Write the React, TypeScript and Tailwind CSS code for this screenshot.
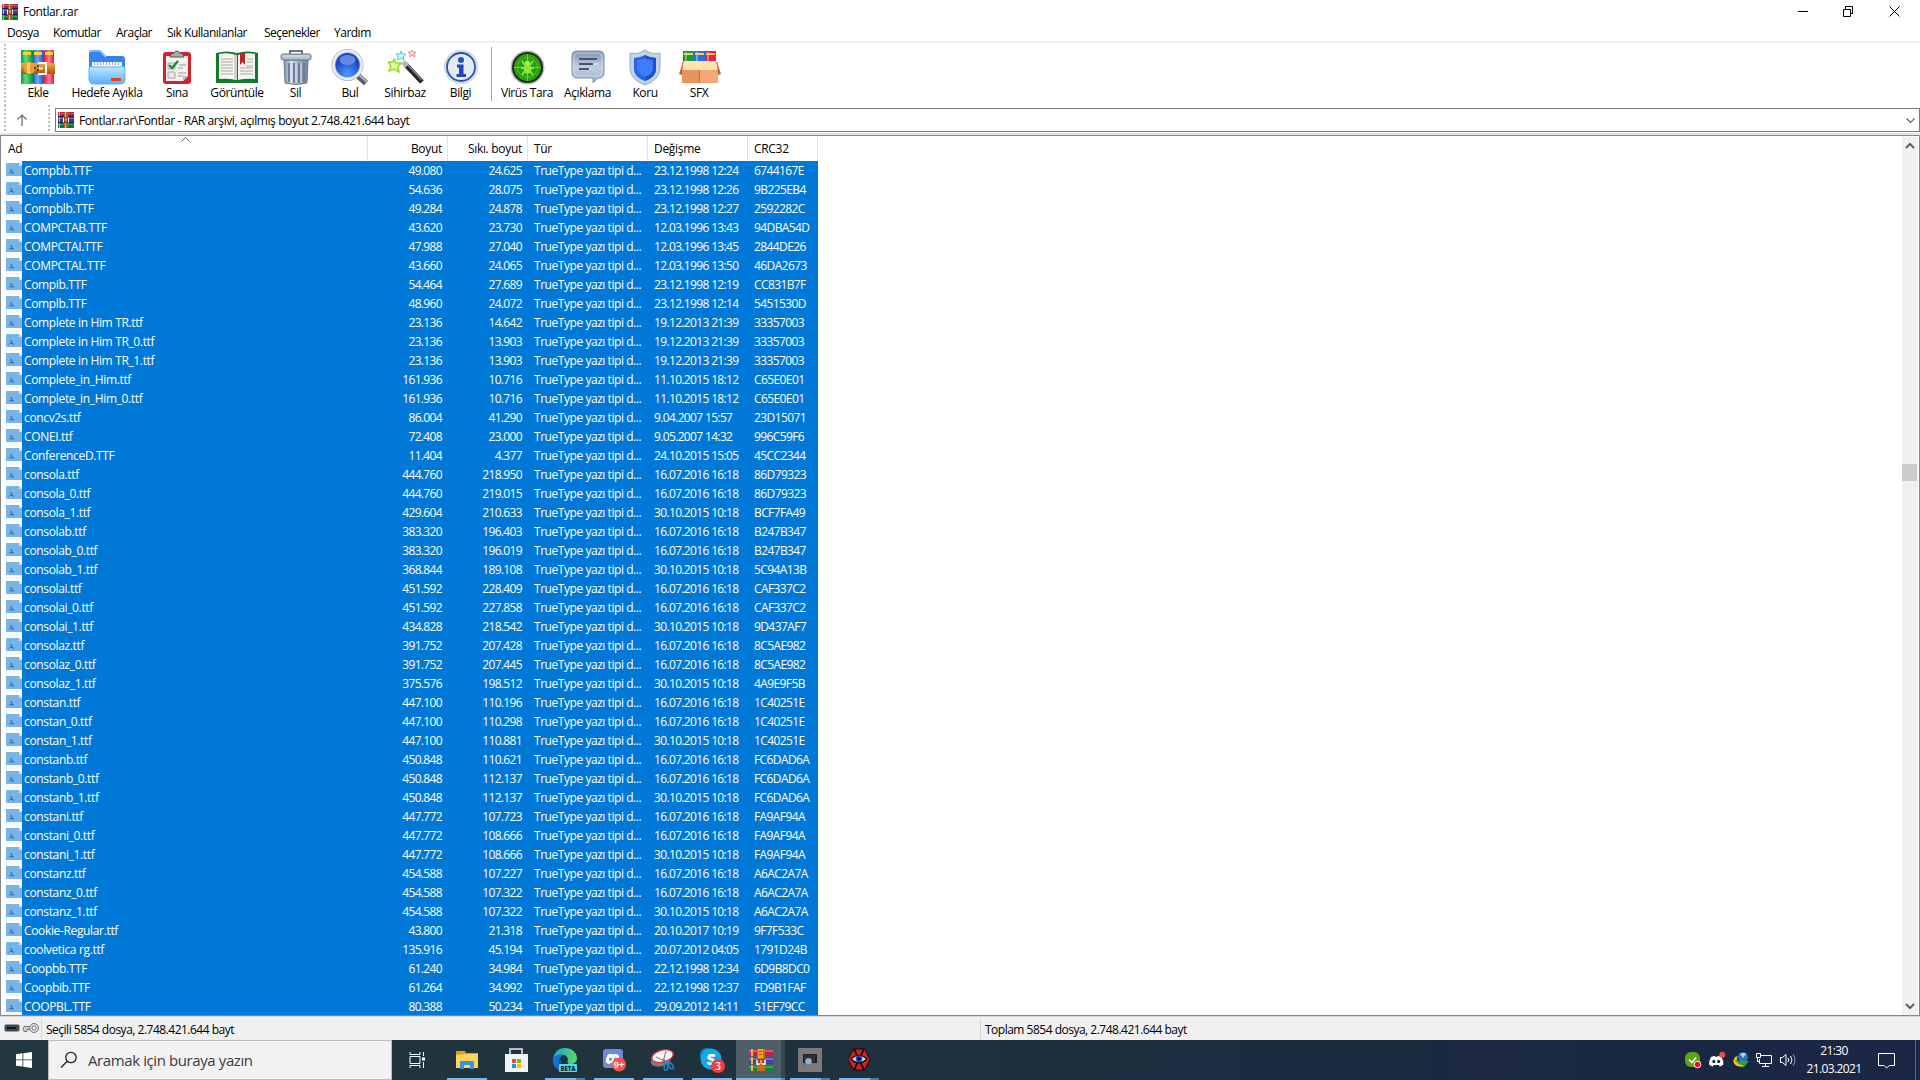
import React from "react";

// name | size | packed | modified | crc
const files = `Compbb.TTF|49.080|24.625|23.12.1998 12:24|6744167E
Compbib.TTF|54.636|28.075|23.12.1998 12:26|9B225EB4
Compblb.TTF|49.284|24.878|23.12.1998 12:27|2592282C
COMPCTAB.TTF|43.620|23.730|12.03.1996 13:43|94DBA54D
COMPCTAI.TTF|47.988|27.040|12.03.1996 13:45|2844DE26
COMPCTAL.TTF|43.660|24.065|12.03.1996 13:50|46DA2673
Compib.TTF|54.464|27.689|23.12.1998 12:19|CC831B7F
Complb.TTF|48.960|24.072|23.12.1998 12:14|5451530D
Complete in Him TR.ttf|23.136|14.642|19.12.2013 21:39|33357003
Complete in Him TR_0.ttf|23.136|13.903|19.12.2013 21:39|33357003
Complete in Him TR_1.ttf|23.136|13.903|19.12.2013 21:39|33357003
Complete_in_Him.ttf|161.936|10.716|11.10.2015 18:12|C65E0E01
Complete_in_Him_0.ttf|161.936|10.716|11.10.2015 18:12|C65E0E01
concv2s.ttf|86.004|41.290|9.04.2007 15:57|23D15071
CONEI.ttf|72.408|23.000|9.05.2007 14:32|996C59F6
ConferenceD.TTF|11.404|4.377|24.10.2015 15:05|45CC2344
consola.ttf|444.760|218.950|16.07.2016 16:18|86D79323
consola_0.ttf|444.760|219.015|16.07.2016 16:18|86D79323
consola_1.ttf|429.604|210.633|30.10.2015 10:18|BCF7FA49
consolab.ttf|383.320|196.403|16.07.2016 16:18|B247B347
consolab_0.ttf|383.320|196.019|16.07.2016 16:18|B247B347
consolab_1.ttf|368.844|189.108|30.10.2015 10:18|5C94A13B
consolai.ttf|451.592|228.409|16.07.2016 16:18|CAF337C2
consolai_0.ttf|451.592|227.858|16.07.2016 16:18|CAF337C2
consolai_1.ttf|434.828|218.542|30.10.2015 10:18|9D437AF7
consolaz.ttf|391.752|207.428|16.07.2016 16:18|8C5AE982
consolaz_0.ttf|391.752|207.445|16.07.2016 16:18|8C5AE982
consolaz_1.ttf|375.576|198.512|30.10.2015 10:18|4A9E9F5B
constan.ttf|447.100|110.196|16.07.2016 16:18|1C40251E
constan_0.ttf|447.100|110.298|16.07.2016 16:18|1C40251E
constan_1.ttf|447.100|110.881|30.10.2015 10:18|1C40251E
constanb.ttf|450.848|110.621|16.07.2016 16:18|FC6DAD6A
constanb_0.ttf|450.848|112.137|16.07.2016 16:18|FC6DAD6A
constanb_1.ttf|450.848|112.137|30.10.2015 10:18|FC6DAD6A
constani.ttf|447.772|107.723|16.07.2016 16:18|FA9AF94A
constani_0.ttf|447.772|108.666|16.07.2016 16:18|FA9AF94A
constani_1.ttf|447.772|108.666|30.10.2015 10:18|FA9AF94A
constanz.ttf|454.588|107.227|16.07.2016 16:18|A6AC2A7A
constanz_0.ttf|454.588|107.322|16.07.2016 16:18|A6AC2A7A
constanz_1.ttf|454.588|107.322|30.10.2015 10:18|A6AC2A7A
Cookie-Regular.ttf|43.800|21.318|20.10.2017 10:19|9F7F533C
coolvetica rg.ttf|135.916|45.194|20.07.2012 04:05|1791D24B
Coopbb.TTF|61.240|34.984|22.12.1998 12:34|6D9B8DC0
Coopbib.TTF|61.264|34.992|22.12.1998 12:37|FD9B1FAF
COOPBL.TTF|80.388|50.234|29.09.2012 14:11|51EF79CC`
  .split("\n")
  .map((line) => line.split("|"));

const menu = [
  { label: "Dosya", width: "w-[46px]" },
  { label: "Komutlar", width: "w-[63px]" },
  { label: "Araçlar", width: "w-[51px]" },
  { label: "Sık Kullanılanlar", width: "w-[97px]" },
  { label: "Seçenekler", width: "w-[70px]" },
  { label: "Yardım", width: "w-[60px]" },
];

function SmallBooksIcon() {
  return (
    <svg width="16" height="16" viewBox="0 0 16 16" className="shrink-0">
      <path d="M0 0h16v5H0z" fill="#b51f43" />
      <path d="M0 1h16v1H0z" fill="#d2537a" />
      <path d="M0 5h16v6H0z" fill="#3f3a94" />
      <path d="M0 6h16v1H0z" fill="#7a78c4" />
      <path d="M0 11h16v5H0z" fill="#0c7a34" />
      <path d="M0 12h16v1H0z" fill="#2da45a" />
      <path d="M0 4.500h16M0 10.500h16" stroke="#2a1c33" />
      <path d="M1 0h1v4H1zM1 5h1v5H1zM1 11h1v5H1z" fill="#e3b04a" />
      <path d="M6 0h4v16H6z" fill="#a8622b" />
      <path d="M7 0h1v5H7zM7 11h1v5H7z" fill="#f1a846" />
      <path d="M5 5h6v6H5z" fill="#8a3b2a" />
      <path d="M5.500 10.500v-5M10.500 10.500v-5M8 6v3.500" stroke="#f4f0ec" />
    </svg>
  );
}

function BooksIcon({ className }: { className: string }) {
  return (
    <svg viewBox="0 0 24 24" className={className}>
      <rect y="1" width="24" height="7" rx="1" fill="#c2224c" />
      <rect y="2" width="24" height="2" fill="#e0567a" />
      <rect y="9" width="24" height="7" rx="1" fill="#4a3f9f" />
      <rect y="10" width="24" height="2" fill="#7770c4" />
      <rect y="17" width="24" height="6" rx="1" fill="#128035" />
      <rect y="18" width="24" height="2" fill="#2fae58" />
      <path d="M2 1h2v7H2zM2 9h2v7H2zM2 17h2v6H2z" fill="#f2b632" />
      <path d="M8 1h8v22H8z" fill="#c9691a" />
      <path d="M9 1h5v9H9z" fill="#f3a12e" />
      <path d="M10 3h3v1h-3zM10 6h3v1h-3z" fill="#a55a10" />
      <path d="M8 11h8v5H8z" fill="#8b4a17" />
      <path d="M8 17v-5M16 17v-5M8 16h3M13 16h3" fill="none" stroke="#f4f4f4" strokeWidth="1.600" />
      <path d="M12 12v4" stroke="#ffc25c" strokeWidth="1.500" />
    </svg>
  );
}

function AddIcon() {
  return (
    <svg width="34" height="34" viewBox="0 0 34 34">
      <defs>
        <linearGradient id="bookG"><stop stopColor="#0b9b3a" /><stop offset=".4" stopColor="#5fdc7c" /><stop offset="1" stopColor="#0d8f36" /></linearGradient>
        <linearGradient id="bookB"><stop stopColor="#1c58d8" /><stop offset=".4" stopColor="#6ea8ff" /><stop offset="1" stopColor="#1c4fd0" /></linearGradient>
        <linearGradient id="bookR"><stop stopColor="#e0173c" /><stop offset=".5" stopColor="#ff8093" /><stop offset="1" stopColor="#d81a3c" /></linearGradient>
        <linearGradient id="belt" x2="0" y2="1"><stop stopColor="#f2b04a" /><stop offset="1" stopColor="#a35508" /></linearGradient>
      </defs>
      <rect x="0" width="12" height="34" rx="1" fill="url(#bookG)" />
      <rect x="12" width="11" height="34" rx="1" fill="url(#bookB)" />
      <rect x="23" width="10" height="34" rx="1" fill="url(#bookR)" />
      <path d="M2 2h8v3H2zM13 2h8v3h-8zM24 2h8v3h-8z" fill="#fbd23c" />
      <path d="M0 13h34v11H0z" fill="url(#belt)" />
      <rect x="3" y="12" width="11" height="12" rx="5" fill="#eba03a" />
      <path d="M6 13h3v10H6z" fill="#ffd277" />
      <path d="M13 17h1.500v2H13zM16 15h1.500v2H16zM16 19h1.500v2H16z" fill="#4d2a07" />
      <path d="M17 13h8v11h-8M18 18.500h4" fill="none" stroke="#f1f1f1" strokeWidth="2" />
    </svg>
  );
}

function ExtractIcon() {
  return (
    <svg width="38" height="36" viewBox="0 0 38 36">
      <defs>
        <linearGradient id="fold" x2="0" y2="1"><stop stopColor="#c3e8ff" /><stop offset="1" stopColor="#57b1f8" /></linearGradient>
      </defs>
      <path d="M1 4q0-3 3-3h7q2 0 4 3l3 3h16q3 0 3 3v21H1z" fill="#3685ee" />
      <path d="M2 3q1-1 3-1h7l6 6" fill="none" stroke="#8cc3ff" strokeWidth="1.500" />
      <rect x="4" y="13" width="30" height="12" fill="#f3f5f8" />
      <path d="M6 14.500h27" stroke="#a6abb4" strokeWidth="3" strokeDasharray="1 2" />
      <path d="M1 19q2-3 5-1h26q3-2 5 1v11q0 5-5 5H6q-5 0-5-5z" fill="url(#fold)" stroke="#62aef2" />
      <rect x="23" y="29" width="10" height="3" fill="#e0401f" />
    </svg>
  );
}

function TestIcon() {
  return (
    <svg width="30" height="35" viewBox="0 0 30 35">
      <rect x="1" y="2" width="28" height="32" rx="3" fill="#d3222c" />
      <path d="M4 6h22v20l-5 5H4z" fill="#f1f1f1" />
      <path d="M26 26l-5 5v-5z" fill="#bdbdbd" />
      <path d="M8 7q0-4 4-4 1-2 3-2t3 2q4 0 4 4z" fill="#a9a9ad" stroke="#55555c" />
      <path d="M6 13h7v6H6zM6 22h7v6H6z" fill="#e8e8e8" stroke="#aaa" />
      <path d="M7 15l3 3 6-7" fill="none" stroke="#23873b" strokeWidth="2.400" />
      <path d="M17 15h7M16 18h5M16 23h8M16 26h5" stroke="#9a9a9a" />
    </svg>
  );
}

function ViewIcon() {
  return (
    <svg width="42" height="33" viewBox="0 0 42 33">
      <path d="M0 2q11-3 21 0 10-3 21 0v30H0z" fill="#137a2b" />
      <path d="M3 3q9-2 17 1v25q-8-2-17-1zM39 3q-9-2-17 1v25q8-2 17-1z" fill="#f6f5ee" />
      <path d="M18 4h3v25h-3z" fill="#d2d1ca" />
      <path d="M5 8h12M5 11h12M5 14h12M5 17h12M5 20h12M5 23h12M30 15h7M24 17h13M24 20h13M24 23h13M31 8h6M31 11h6" stroke="#a5a8a5" />
      <path d="M24 2h5v12l-2.500-3-2.500 3z" fill="#c81f2c" />
    </svg>
  );
}

function DeleteIcon() {
  return (
    <svg width="32" height="36" viewBox="0 0 32 36">
      <defs>
        <linearGradient id="bin"><stop stopColor="#7f91a9" /><stop offset=".3" stopColor="#d5dfea" /><stop offset=".6" stopColor="#9dadc1" /><stop offset="1" stopColor="#71839b" /></linearGradient>
      </defs>
      <path d="M10 5V2h12v3" fill="none" stroke="#65758a" strokeWidth="2" />
      <path d="M4 11h24l-1 23q-11 3-22 0z" fill="url(#bin)" stroke="#697b92" />
      <path d="M9 14v19M14 14v20M19 14v20M24 14v19" stroke="#667890" strokeWidth="1.800" />
      <path d="M11 14v19M16 14v20M21 14v20" stroke="#dbe5ef" />
      <rect x="1" y="5" width="30" height="6" rx="2" fill="#b3c0cf" stroke="#66778e" />
      <path d="M3 7h26" stroke="#dce5ee" />
    </svg>
  );
}

function FindIcon() {
  return (
    <svg width="38" height="37" viewBox="0 0 38 37">
      <defs>
        <radialGradient id="lens" cy=".8"><stop stopColor="#4d9dff" /><stop offset="1" stopColor="#1c46c4" /></radialGradient>
      </defs>
      <path d="M26 26l9 8" stroke="#555d68" strokeWidth="6" />
      <path d="M27 25l9 8" stroke="#b4bac2" strokeWidth="2" />
      <circle cx="16.500" cy="16" r="14" fill="url(#lens)" stroke="#aab2bf" strokeWidth="4" />
      <circle cx="16.500" cy="16" r="14" fill="none" stroke="#e8edf4" strokeWidth="2.600" />
      <ellipse cx="16.500" cy="11" rx="8" ry="5" fill="#7da4ed" opacity=".7" />
    </svg>
  );
}

function WizardIcon() {
  return (
    <svg width="37" height="36" viewBox="0 0 37 36" className="ml-[3px]">
      <path d="M17 15l17 18" stroke="#28282c" strokeWidth="5" />
      <path d="M18 14l16 17" stroke="#85858a" strokeWidth="1.500" />
      <path d="M15 13l4 4" stroke="#b9b9bd" strokeWidth="5" />
      <path d="M6 10l2 4 5 0-3 4 1 5-5-3-5 2 2-5-3-4 5 0z" fill="#e2ff9c" stroke="#8fe02c" strokeWidth="1.500" />
      <path d="M13 2l1 3 4 0-3 3 1 3-3-2-4 2 1-4-2-2 4 0z" fill="#d6fbff" stroke="#37d3f0" />
      <path d="M24 1l1 2 3 0-2 2 1 3-3-2-2 2 0-3-2-2 2 0z" fill="#ffd2d2" stroke="#f08c90" />
    </svg>
  );
}

function InfoIcon() {
  return (
    <svg width="36" height="36" viewBox="0 0 36 36">
      <circle cx="18" cy="18" r="17" fill="#cdd2da" />
      <circle cx="18" cy="18" r="15.500" fill="#eceff4" />
      <circle cx="18" cy="18" r="14" fill="#e5e9f0" stroke="#2b50b4" strokeWidth="1.800" />
      <circle cx="18" cy="11" r="3" fill="#2451bd" />
      <path d="M14 15.500h6.500V25H23v3h-9.500v-3H16v-6.500h-2z" fill="#2149b8" />
    </svg>
  );
}

function VirusIcon() {
  return (
    <svg width="35" height="35" viewBox="0 0 35 35">
      <circle cx="17.500" cy="17.500" r="17" fill="#bababa" />
      <circle cx="17.500" cy="17.500" r="15.500" fill="#242b22" />
      <circle cx="17.500" cy="17.500" r="13.500" fill="#2b9e12" />
      <circle cx="17.500" cy="17.500" r="10" fill="none" stroke="#4fc128" />
      <path d="M17.500 4v27M4 17.500h27" stroke="#65d637" />
      <path d="M12 11l3 4M23 11l-3 4M11 18h4M24 18h-4M12 25l3-4M23 25l-3-4" stroke="#a1f252" strokeWidth="1.300" />
      <ellipse cx="17.500" cy="19" rx="4" ry="5" fill="#8aea38" />
      <circle cx="17.500" cy="13" r="2.500" fill="#9df04d" />
    </svg>
  );
}

function CommentIcon() {
  return (
    <svg width="34" height="34" viewBox="0 0 34 34">
      <defs>
        <linearGradient id="bub" x2="0" y2="1"><stop stopColor="#7d91b2" /><stop offset=".5" stopColor="#c2cfe3" /><stop offset="1" stopColor="#9fb0cb" /></linearGradient>
      </defs>
      <path d="M6 1h22q5 0 5 5v17q0 5-5 5h-1l-5 5v-5H6q-5 0-5-5V6q0-5 5-5z" fill="url(#bub)" stroke="#8193ae" />
      <rect x="3" y="3" width="28" height="23" rx="4" fill="none" stroke="#d7e1ef" opacity=".7" />
      <path d="M8 9h18M8 14h14M8 19h10" stroke="#46566f" strokeWidth="1.800" />
      <path d="M22 14h5M18 19h2" stroke="#eef2f8" />
    </svg>
  );
}

function ProtectIcon() {
  return (
    <svg width="32" height="37" viewBox="0 0 32 37">
      <path d="M16 1q7 5 15 3v15q0 12-15 17Q1 31 1 19V4q8 2 15-3z" fill="#c4d1e4" stroke="#9dadc5" />
      <path d="M16 6q5 3 11 3v11q0 8-11 12Q5 28 5 20V9q6 0 11-3z" fill="#2464e8" />
      <path d="M16 6q5 3 11 3v11q0 8-11 12z" fill="#1d4fcf" />
      <path d="M16 9q4 2 8 2v8q0 6-8 9-8-3-8-9v-8q4 0 8-2z" fill="#3d7df8" />
    </svg>
  );
}

function SfxIcon() {
  return (
    <svg width="42" height="34" viewBox="0 0 42 34" className="ml-[2px]">
      <path d="M4 1h11v12H4z" fill="#169a40" />
      <path d="M15 1h11v12H15z" fill="#2b6ee0" />
      <path d="M26 1h11v12H26z" fill="#e0244a" />
      <path d="M6 2h2v10H6zM17 2h2v10h-2zM28 2h2v10h-2z" fill="#fff" opacity=".35" />
      <path d="M5 4h9M16 4h9M27 4h9" stroke="#fbd23c" strokeWidth="2" />
      <path d="M3 12h36v21H3z" fill="#e9935e" />
      <path d="M21 20h18v13H21z" fill="#f3a976" />
      <path d="M5 11h32l2 9H3z" fill="#ffe2ae" />
      <path d="M4 12L0 24l3 1zM38 12l4 12-3 1z" fill="#b5673c" />
      <path d="M20.500 20v13" stroke="#c2703e" />
    </svg>
  );
}

const tools = [
  { label: "Ekle", width: "w-[54px]", icon: <AddIcon /> },
  { label: "Hedefe Ayıkla", width: "w-[84px]", icon: <ExtractIcon /> },
  { label: "Sına", width: "w-[56px]", icon: <TestIcon /> },
  { label: "Görüntüle", width: "w-[64px]", icon: <ViewIcon /> },
  { label: "Sil", width: "w-[53px]", icon: <DeleteIcon /> },
  { label: "Bul", width: "w-[56px]", icon: <FindIcon /> },
  { label: "Sihirbaz", width: "w-[54px]", icon: <WizardIcon /> },
  { label: "Bilgi", width: "w-[57px]", icon: <InfoIcon /> },
];

const tools2 = [
  { label: "Virüs Tara", width: "w-[60px]", icon: <VirusIcon /> },
  { label: "Açıklama", width: "w-[61px]", icon: <CommentIcon /> },
  { label: "Koru", width: "w-[54px]", icon: <ProtectIcon /> },
  { label: "SFX", width: "w-[54px]", icon: <SfxIcon /> },
];

function Tool({ label, width, icon }: { label: string; width: string; icon: React.ReactNode }) {
  return (
    <div className={`${width} flex flex-col items-center shrink-0`}>
      <div className="h-[38px] flex items-center">{icon}</div>
      <span className="leading-[14px]">{label}</span>
    </div>
  );
}

function FontFileIcon() {
  return (
    <svg width="16" height="19" viewBox="0 0 16 19" className="shrink-0">
      <path d="M0 15h16v4H0z" fill="#f7f7f7" />
      <path d="M0 2h13l3 3v10H0z" fill="#78b4e6" />
      <path d="M13 2v3h3z" fill="#c9dff2" />
      <path d="M3 13l2-5" stroke="#4f92d2" strokeWidth=".8" />
      <path d="M5 8l2.500 5M4 11.500h2.500" stroke="#2468bb" />
    </svg>
  );
}

function Grip({ className }: { className: string }) {
  return (
    <div className={`${className} w-[2px] shrink-0 bg-[repeating-linear-gradient(to_bottom,#bdbdbd_0_2px,#fff_2px_4px)]`} />
  );
}

function FileList() {
  return (
    <div className="h-[881px] flex border border-[#828790] bg-white overflow-hidden shrink-0">
      <div className="flex-1 overflow-hidden">
        <div className="h-[25px] flex leading-[25px] tracking-[-0.3px] relative">
          <div className="w-[367px] pl-[7px] border-r border-[#e5e5e5]">Ad</div>
          <div className="w-[80px] pr-[5px] text-right border-r border-[#e5e5e5]">Boyut</div>
          <div className="w-[80px] pr-[5px] text-right border-r border-[#e5e5e5]">Sıkı. boyut</div>
          <div className="w-[120px] pl-[6px] border-r border-[#e5e5e5]">Tür</div>
          <div className="w-[100px] pl-[6px] border-r border-[#e5e5e5]">Değişme</div>
          <div className="w-[70px] pl-[6px] border-r border-[#e5e5e5]">CRC32</div>
          <svg width="9" height="5" viewBox="0 0 9 5" className="absolute left-[180px] top-[1px]">
            <path d="M.5 4.500l4-4 4 4" fill="none" stroke="#666" />
          </svg>
        </div>
        {files.map(([name, size, packed, modified, crc]) => (
          <div key={name} className="h-[19px] w-[817px] pl-[5px] flex leading-[19px] text-white whitespace-nowrap">
            <FontFileIcon />
            <div className="flex flex-1 bg-[#0078d7]">
              <div className="w-[346px] pl-[2px] tracking-[-0.35px]">{name}</div>
              <div className="w-[80px] pr-[6px] text-right tracking-[-0.65px]">{size}</div>
              <div className="w-[80px] pr-[6px] text-right tracking-[-0.65px]">{packed}</div>
              <div className="w-[120px] pl-[6px] tracking-[-0.45px]">TrueType yazı tipi d...</div>
              <div className="w-[100px] pl-[6px] tracking-[-0.65px]">{modified}</div>
              <div className="pl-[6px] tracking-[-0.6px]">{crc}</div>
            </div>
          </div>
        ))}
      </div>
      <div className="w-[16px] mr-[1px] mt-px bg-[#f0f0f0] flex flex-col items-center">
        <svg width="16" height="17" viewBox="0 0 16 17">
          <path d="M4 11l4-4 4 4" fill="none" stroke="#606060" strokeWidth="2" />
        </svg>
        <div className="mt-[310px] w-[15px] h-[17px] self-start bg-[#cdcdcd]" />
        <svg width="16" height="17" viewBox="0 0 16 17" className="mt-auto">
          <path d="M4 6l4 4 4-4" fill="none" stroke="#606060" strokeWidth="2" />
        </svg>
      </div>
    </div>
  );
}

function ExplorerIcon() {
  return (
    <svg width="24" height="24" viewBox="0 0 24 24">
      <path d="M1 3h9l1 2h12v3H1z" fill="#e2a10c" />
      <path d="M1 7l10-1h12v14H1z" fill="#ffd35e" />
      <path d="M5 21v-7q0-1 1-1h12q1 0 1 1v7h-4v-4H9v4z" fill="#3a94dd" />
    </svg>
  );
}

function StoreIcon() {
  return (
    <svg width="24" height="26" viewBox="0 0 24 26">
      <path d="M6 9V2h12v7" fill="none" stroke="#e9e9e9" strokeWidth="1.500" />
      <path d="M1 7h23v18H1z" fill="#f2f2f2" />
      <path d="M8 12h4v4H8z" fill="#f04e1f" />
      <path d="M13 12h4v4h-4z" fill="#7db900" />
      <path d="M8 17h4v4H8z" fill="#00a2ed" />
      <path d="M13 17h4v4h-4z" fill="#fdb800" />
    </svg>
  );
}

function EdgeIcon() {
  return (
    <svg width="26" height="26" viewBox="0 0 26 26">
      <defs>
        <linearGradient id="edge"><stop stopColor="#1b9de2" /><stop offset="1" stopColor="#5ed85e" /></linearGradient>
      </defs>
      <path d="M1 12C2 4 8 1 13 1c7 0 12 5 12 10 0 4-3 6-6 6-4 0-4-2-3-4 0-4-4-6-8-5-3 0-6 2-7 4z" fill="url(#edge)" />
      <path d="M1 12c2-4 6-5 10-4-4 2-5 8-2 12 1 2 3 3 4 4C6 25 0 19 1 12z" fill="#1272cf" />
      <path d="M10 10c-2 4 0 8 4 9 3 1 6 0 9-1-2 5-6 7-10 7-5-3-8-10-3-15z" fill="#0d4d9b" />
      <rect x="7" y="17" width="18" height="8" rx="1" fill="#4adcf5" />
      <text x="16" y="23.500" textAnchor="middle" textLength="15" lengthAdjust="spacingAndGlyphs" fontSize="7" fontWeight="800" letterSpacing="0" fill="#0b1a26" fontFamily="Open Sans, sans-serif">BETA</text>
    </svg>
  );
}

function DiscordFace({ fill }: { fill: string }) {
  return (
    <>
      <path d="M5 5q3-1.500 5-1.500l.5 1h3l.5-1q2 0 5 1.500 3 5 2.500 10-2 2-5 2.500l-1-2h-7l-1 2q-3-.5-5-2.500Q2 10 5 5z" fill="#fff" />
      <ellipse cx="8.800" cy="11" rx="2" ry="2.200" fill={fill} />
      <ellipse cx="15.200" cy="11" rx="2" ry="2.200" fill={fill} />
    </>
  );
}

function DiscordIcon() {
  return (
    <svg width="24" height="24" viewBox="0 0 24 24">
      <rect x="1" y="1" width="20" height="19" rx="3" fill="#7289da" />
      <g transform="translate(2 3) scale(.75)"><DiscordFace fill="#7289da" /></g>
      <circle cx="17" cy="16.500" r="7" fill="#f25555" />
      <text x="17" y="20" textAnchor="middle" fontSize="9.500" fontWeight="600" letterSpacing="0" fill="#fff" fontFamily="Open Sans, sans-serif">9+</text>
    </svg>
  );
}

function SnipIcon() {
  return (
    <svg width="26" height="24" viewBox="0 0 26 24">
      <ellipse cx="11" cy="12" rx="10.500" ry="6" fill="#7d7d82" transform="rotate(-18 11 12)" />
      <ellipse cx="12.500" cy="8" rx="11" ry="6" fill="#f5f5f5" stroke="#d8343a" strokeWidth="1.300" transform="rotate(-15 13 8)" />
      <path d="M6 9l10 5M16 3l-3 11" stroke="#777" />
      <path d="M13 11l5 5M15 13l6 2" stroke="#3f83b5" strokeWidth="1.500" />
      <ellipse cx="16" cy="19" rx="1.800" ry="3.200" fill="none" stroke="#1e7fc0" strokeWidth="1.700" />
      <ellipse cx="21" cy="18" rx="1.800" ry="3.200" fill="none" stroke="#1e7fc0" strokeWidth="1.700" transform="rotate(-35 21 18)" />
    </svg>
  );
}

function SkypeIcon() {
  return (
    <svg width="26" height="26" viewBox="0 0 26 26">
      <circle cx="8" cy="8" r="7" fill="#0a86d0" />
      <circle cx="16" cy="17" r="7" fill="#0a86d0" />
      <circle cx="12" cy="12" r="10.500" fill="#13a8e8" />
      <text x="12" y="17.500" textAnchor="middle" fontSize="16" fontWeight="800" letterSpacing="0" fill="#fff" fontFamily="Open Sans, sans-serif">S</text>
      <circle cx="19" cy="19" r="7" fill="#f03d3d" />
      <text x="19" y="22.700" textAnchor="middle" fontSize="10" fontWeight="600" letterSpacing="0" fill="#fff" fontFamily="Open Sans, sans-serif">3</text>
    </svg>
  );
}

function CaptureIcon() {
  return (
    <svg width="24" height="24" viewBox="0 0 24 24">
      <path d="M0 0h24v24H0z" fill="#7b7b7b" />
      <path d="M5 6h14v9H5z" fill="#1d1f21" />
      <path d="M7 7v4M10 7v4M13 7v6M16 7v7" stroke="#515458" />
      <circle cx="10.500" cy="13.500" r="3.300" fill="#8fb4cd" stroke="#6d8698" />
      <path d="M8 16l-3.500 4" stroke="#5d6f7b" strokeWidth="1.300" />
    </svg>
  );
}

function EyeIcon() {
  return (
    <svg width="24" height="24" viewBox="0 0 24 24">
      <path d="M6.500 1h11L23 11.500 17.500 22h-11L1 11.500z" fill="#d12222" stroke="#1c0808" />
      <path d="M7 1l5 10.500L17 1M7 22l5-10.500L17 22" fill="none" stroke="#1c0808" strokeWidth="1.800" />
      <path d="M3 11q4-4 9-4t9 4q-4 4.500-9 4.500T3 11z" fill="#161616" />
      <path d="M5 11q3-3 7-3t7 3q-3 3-7 3t-7-3z" fill="#d5d8e6" />
      <circle cx="12" cy="10.800" r="3.300" fill="#1f45c4" />
      <circle cx="12" cy="10.800" r="1.600" fill="#000" />
    </svg>
  );
}

// mark: underline below the icon, stacked when several windows are open
const apps = [
  { key: "explorer", icon: <ExplorerIcon />, mark: "single" },
  { key: "store", icon: <StoreIcon />, mark: "none" },
  { key: "edge", icon: <EdgeIcon />, mark: "stack" },
  { key: "discord", icon: <DiscordIcon />, mark: "single" },
  { key: "snip", icon: <SnipIcon />, mark: "single" },
  { key: "skype", icon: <SkypeIcon />, mark: "single" },
  { key: "winrar", icon: <BooksIcon className="w-6 h-6" />, mark: "active" },
  { key: "capture", icon: <CaptureIcon />, mark: "stack" },
  { key: "eye", icon: <EyeIcon />, mark: "stack" },
];

function Taskbar() {
  return (
    <div className="h-[40px] flex shrink-0 bg-[linear-gradient(to_right,#22373f,#20323d_40%,#1b2940_75%,#1a2645)]">
      <div className="w-[48px] flex items-center justify-center">
        <svg width="16" height="16" viewBox="0 0 16 16" fill="#fff">
          <path d="M0 2.200L6.500 1.300v6.200H0zM7.300 1.200L16 0v7.500H7.300zM0 8.300h6.500v6.200L0 13.700zM7.300 8.300H16V16l-8.700-1.200z" />
        </svg>
      </div>
      <div className="w-[344px] bg-[#f2f2f2] border border-[#bcbcbc] flex items-center">
        <svg width="18" height="18" viewBox="0 0 18 18" className="ml-[11px]">
          <circle cx="11" cy="6.500" r="5.200" fill="none" stroke="#222" strokeWidth="1.300" />
          <path d="M7.200 10.200L1 16.500" stroke="#222" strokeWidth="1.300" />
        </svg>
        <span className="ml-[10px] text-[15px] tracking-[-0.4px] text-[#3c3c3c]">Aramak için buraya yazın</span>
      </div>
      <div className="w-[50px] flex items-center justify-center">
        <svg width="17" height="16" viewBox="0 0 17 16" fill="none" stroke="#fff">
          <path d="M1 0v2.500h10V0M1 16v-2.500h10V16M1 4.500h10v7H1zM14.500 0v4M14.500 10v6" />
          <path d="M13 5.500h3v3h-3z" fill="#fff" stroke="none" />
        </svg>
      </div>
      {apps.map((app) => (
        <div
          key={app.key}
          className={`w-[49px] flex flex-col items-center ${app.mark === "active" ? "bg-[linear-gradient(to_right,#4e5f69_45px,#38464f_45px)]" : ""}`}
        >
          <div className="h-[38px] w-[40px] flex items-center justify-center pt-px">{app.icon}</div>
          {app.mark === "single" && <div className="h-[2px] w-[40px] bg-[#76b9ed]" />}
          {app.mark === "active" && <div className="h-[2px] w-full bg-[linear-gradient(to_right,#76b9ed_45px,#568bb3_45px)]" />}
          {app.mark === "stack" && <div className="h-[2px] w-[40px] bg-[linear-gradient(to_right,#76b9ed_31px,#4d7fa6_31px)]" />}
        </div>
      ))}
      <div className="ml-auto flex items-center text-white">
        <svg width="18" height="18" viewBox="0 0 18 18">
          <rect x="1" y="1" width="15" height="15" rx="6" fill="#5ba614" />
          <path d="M5 8.500l3 3 4-5" fill="none" stroke="#fff" strokeWidth="1.600" />
          <circle cx="13.500" cy="13.500" r="3.300" fill="#e81123" stroke="#fff" />
        </svg>
        <svg width="18" height="18" viewBox="0 0 24 24" className="ml-[6px]">
          <g transform="translate(-1 3)"><DiscordFace fill="#1b2741" /></g>
          <circle cx="19" cy="5" r="4" fill="#f04747" />
        </svg>
        <svg width="18" height="18" viewBox="0 0 18 18" className="ml-[6px]">
          <path d="M3 6q-4 6 2 9 6 2 9-1-6 0-8-3-2-3 0-6z" fill="#f0c418" />
          <circle cx="11" cy="6" r="5" fill="#2a6fc8" />
          <path d="M8 3q4-2 6 0l-3 4z" fill="#b8d2ef" />
          <path d="M3 9l5 1 3-3-1 3 7 0-6 7 0-3q-5 0-8-5z" fill="#2ba52d" />
        </svg>
        <svg width="18" height="16" viewBox="0 0 18 16" fill="none" stroke="#fff" className="ml-[5px]">
          <path d="M6 3.500h10.500v8H4.500V7M10.500 11.500v3M7 14.500h7M1.500 1.500h4v4h-4zM2.500 5.500v4h2" />
        </svg>
        <svg width="18" height="16" viewBox="0 0 18 16" fill="none" stroke="#fff" className="ml-[6px]">
          <path d="M1.500 5.500h2l3.500-3v11l-3.500-3h-2zM9 6q1.500 2 0 4M11.500 4q3 4 0 8" />
          <path d="M14 2q4 6 0 12" stroke="#8791a0" />
        </svg>
        <div className="ml-[7px] w-[60px] text-center tracking-[-0.6px] leading-[18px]">
          <div>21:30</div>
          <div className="whitespace-nowrap">21.03.2021</div>
        </div>
        <svg width="17" height="17" viewBox="0 0 17 17" fill="none" stroke="#fff" className="ml-[14px] mr-[20px]">
          <path d="M.5 1.500h16v12h-5L8.500 16l-2.500-2.500H.5z" />
        </svg>
        <div className="w-[5px] h-[40px] border-l border-[#5d6878]" />
      </div>
    </div>
  );
}

export default function App() {
  return (
    <div className="w-[1920px] h-[1080px] overflow-hidden bg-white text-black text-[12px] tracking-[-0.4px] font-['Open_Sans','Noto_Sans',sans-serif] flex flex-col">
      {/* Title bar */}
      <div className="h-[24px] flex items-center pl-[2px] shrink-0">
        <SmallBooksIcon />
        <span className="ml-[5px]">Fontlar.rar</span>
        <svg width="102" height="11" viewBox="0 0 102 11" fill="none" stroke="#000" className="ml-auto mr-[20px] -mt-[2px]">
          <path d="M0 5.500h10M45.500 3.500h7v7h-7zM47.500 3V.5h7v7H53M91.500.5l10 10M101.500.5l-10 10" />
        </svg>
      </div>
      {/* Menu */}
      <div className="h-[19px] flex border-b-2 border-[#f0f0f0] pl-[7px] leading-[18px] tracking-[-0.5px] shrink-0">
        {menu.map((item) => (
          <div key={item.label} className={`${item.width} whitespace-nowrap`}>{item.label}</div>
        ))}
      </div>
      {/* Toolbar */}
      <div className="h-[62px] flex pl-[4px] pt-px shrink-0">
        <Grip className="h-[61px]" />
        <div className="flex pl-[5px] pt-[4px] whitespace-nowrap">
          {tools.map((tool) => (
            <Tool key={tool.label} {...tool} />
          ))}
          <div className="w-px h-[54px] ml-[2px] mr-[5px] -mt-px bg-[#a0a0a0]" />
          {tools2.map((tool) => (
            <Tool key={tool.label} {...tool} />
          ))}
        </div>
      </div>
      {/* Address bar */}
      <div className="h-[30px] flex pl-[4px] border-b-2 border-[#e3e3e3] shrink-0">
        <Grip className="h-[28px]" />
        <svg width="10" height="12" viewBox="0 0 10 12" fill="none" stroke="#808080" strokeWidth="1.500" className="ml-[11px] mt-[9px]">
          <path d="M5 12V1M.5 5.500L5 1l4.500 4.500" />
        </svg>
        <Grip className="h-[28px] ml-[21px]" />
        <div className="ml-[5px] mt-[3px] h-[24px] flex-1 flex items-center border border-[#7a7a7a] pl-[2px]">
          <SmallBooksIcon />
          <span className="ml-[5px] pt-px">Fontlar.rar\Fontlar - RAR arşivi, açılmış boyut 2.748.421.644 bayt</span>
          <svg width="9" height="6" viewBox="0 0 9 6" className="ml-auto mr-[4px] mt-px">
            <path d="M.5.5l4 4 4-4" fill="none" stroke="#606060" strokeWidth="1.200" />
          </svg>
        </div>
      </div>
      <FileList />
      {/* Status bar */}
      <div className="h-[24px] flex items-center bg-[#f0f0f0] border-t border-[#d9d9d9] tracking-[-0.5px] shrink-0">
        <svg width="36" height="12" viewBox="0 0 36 12" className="ml-[4px] -mt-[2px]">
          <rect x=".5" y="2.500" width="15" height="7" rx="2" fill="#3c474f" stroke="#8fa3b0" />
          <path d="M3 6h9" stroke="#11181c" strokeWidth="2" />
          <path d="M20 4.500h7v3h-4v2h-3l-1-3z" fill="#c9c9c9" stroke="#777" />
          <circle cx="30" cy="6" r="4.500" fill="#ddd" stroke="#777" />
          <circle cx="30" cy="6" r="2" fill="#fff" stroke="#777" />
        </svg>
        <div className="w-[939px] ml-px h-[20px] border-l border-[#d5d5d5] pl-[4px] leading-[21px]">Seçili 5854 dosya, 2.748.421.644 bayt</div>
        <div className="h-[20px] border-l border-[#d5d5d5] pl-[4px] leading-[21px]">Toplam 5854 dosya, 2.748.421.644 bayt</div>
      </div>
      <Taskbar />
    </div>
  );
}
